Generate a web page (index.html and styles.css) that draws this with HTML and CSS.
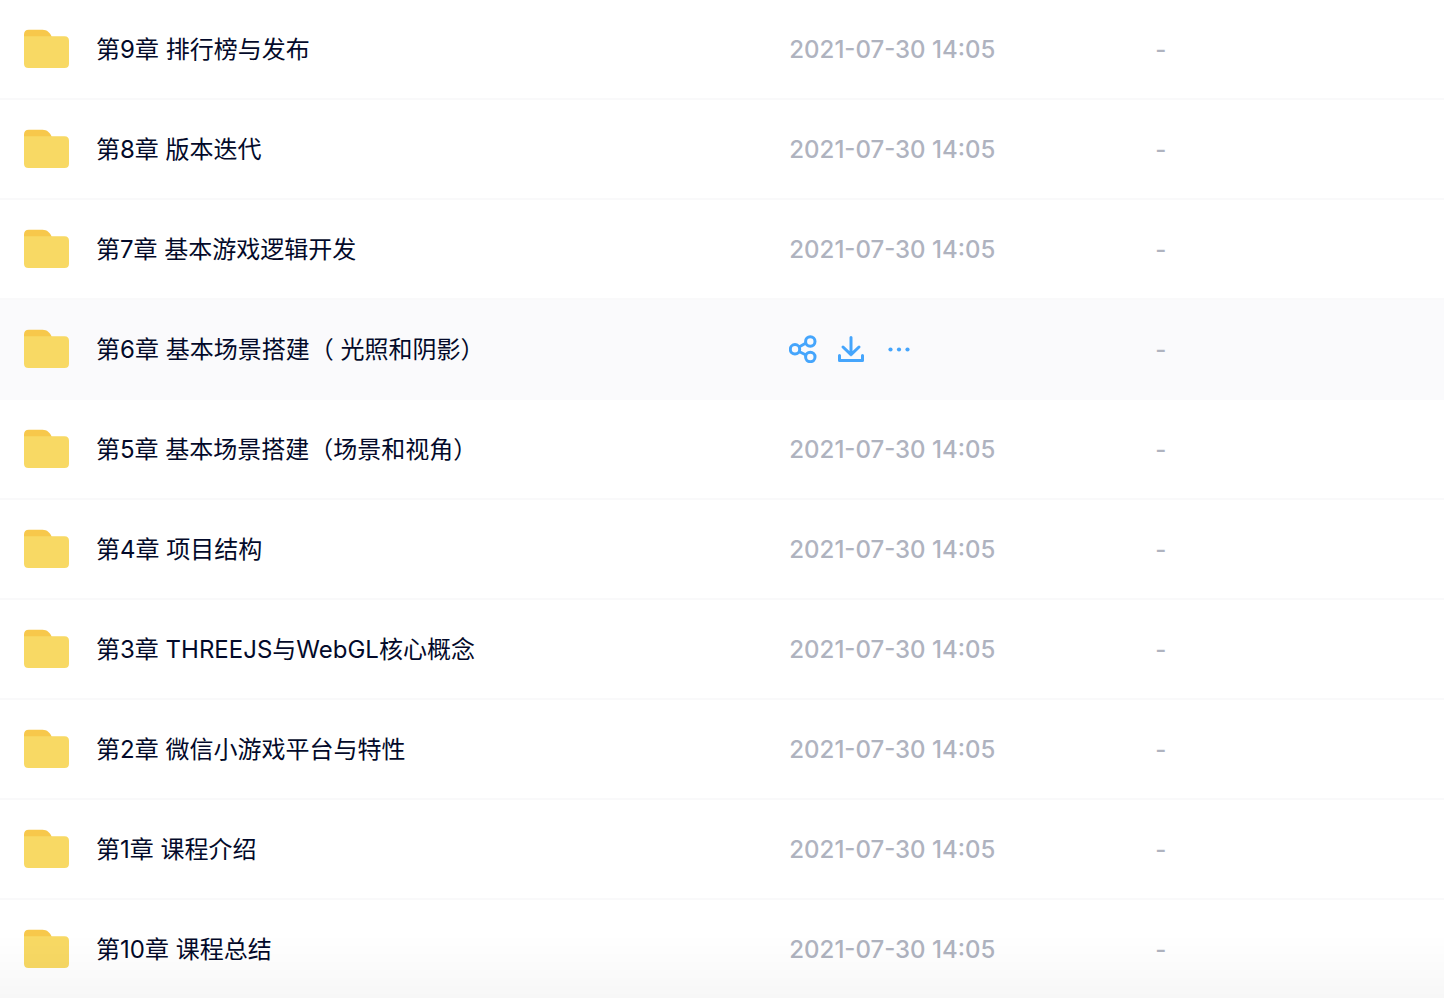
FILE: index.html
```html
<!DOCTYPE html>
<html lang="zh-CN">

<head>
    <meta charset="utf-8">
    <title>文件列表</title>
    <link rel="stylesheet" href="styles.css">
</head>

<body>
    <svg class="sprite" aria-hidden="true">
        <symbol id="folder" viewBox="0 0 46 40">
            <path fill="#f7c84b" d="M0 12V5.500Q0 .7 4.800 .7H18.500C23 .7 26 3.500 27.500 7.500V12Z" />
            <path fill="#f8d964" d="M0 7.200H40.500Q45 7.200 45 11.700V34.500Q45 39 40.500 39H4.500Q0 39 0 34.500Z" />
        </symbol>
    </svg>

    <main>
        <table class="file-list" aria-label="文件列表">
            <colgroup>
                <col class="col-name">
                <col class="col-date">
                <col class="col-size">
            </colgroup>
            <tbody>
                <tr>
                    <td><a class="name" href="#"><svg class="folder"><use href="#folder" /></svg><span>第9章 排行榜与发布</span></a></td>
                    <td><span>2021-07-30 14:05</span></td>
                    <td><span>-</span></td>
                </tr>
                <tr>
                    <td><a class="name" href="#"><svg class="folder"><use href="#folder" /></svg><span>第8章 版本迭代</span></a></td>
                    <td><span>2021-07-30 14:05</span></td>
                    <td><span>-</span></td>
                </tr>
                <tr>
                    <td><a class="name" href="#"><svg class="folder"><use href="#folder" /></svg><span>第7章 基本游戏逻辑开发</span></a></td>
                    <td><span>2021-07-30 14:05</span></td>
                    <td><span>-</span></td>
                </tr>
                <tr class="active">
                    <td><a class="name" href="#"><svg class="folder"><use href="#folder" /></svg><span>第6章 基本场景搭建（ 光照和阴影）</span></a></td>
                    <td>
                        <div class="actions">
                            <button type="button" aria-label="分享">
                                <svg viewBox="0 0 28 28">
                                    <path d="M10 12L17 8M10 16.500L17 20" />
                                    <circle cx="6" cy="14.300" r="4.700" />
                                    <circle cx="21.300" cy="6.500" r="4.700" />
                                    <circle cx="21.300" cy="22" r="4.700" />
                                </svg>
                            </button>
                            <button type="button" aria-label="下载">
                                <svg viewBox="0 0 28 28">
                                    <path class="round" d="M14 2.500V19.500M6 12L14 19.700L22 12" />
                                    <path class="round" d="M2.500 20.500V25.500H25.500V20.500" />
                                </svg>
                            </button>
                            <button type="button" aria-label="更多">
                                <svg class="dots" viewBox="0 0 28 28">
                                    <circle cx="5.500" cy="14.500" r="2.100" />
                                    <circle cx="14" cy="14.500" r="2.100" />
                                    <circle cx="22.500" cy="14.500" r="2.100" />
                                </svg>
                            </button>
                        </div>
                    </td>
                    <td><span>-</span></td>
                </tr>
                <tr>
                    <td><a class="name" href="#"><svg class="folder"><use href="#folder" /></svg><span>第5章 基本场景搭建（场景和视角）</span></a></td>
                    <td><span>2021-07-30 14:05</span></td>
                    <td><span>-</span></td>
                </tr>
                <tr>
                    <td><a class="name" href="#"><svg class="folder"><use href="#folder" /></svg><span>第4章 项目结构</span></a></td>
                    <td><span>2021-07-30 14:05</span></td>
                    <td><span>-</span></td>
                </tr>
                <tr>
                    <td><a class="name" href="#"><svg class="folder"><use href="#folder" /></svg><span>第3章 THREEJS与WebGL核心概念</span></a></td>
                    <td><span>2021-07-30 14:05</span></td>
                    <td><span>-</span></td>
                </tr>
                <tr>
                    <td><a class="name" href="#"><svg class="folder"><use href="#folder" /></svg><span>第2章 微信小游戏平台与特性</span></a></td>
                    <td><span>2021-07-30 14:05</span></td>
                    <td><span>-</span></td>
                </tr>
                <tr>
                    <td><a class="name" href="#"><svg class="folder"><use href="#folder" /></svg><span>第1章 课程介绍</span></a></td>
                    <td><span>2021-07-30 14:05</span></td>
                    <td><span>-</span></td>
                </tr>
                <tr>
                    <td><a class="name" href="#"><svg class="folder"><use href="#folder" /></svg><span>第10章 课程总结</span></a></td>
                    <td><span>2021-07-30 14:05</span></td>
                    <td><span>-</span></td>
                </tr>
            </tbody>
        </table>
    </main>
    <div class="fade"></div>
</body>

</html>
```
FILE: styles.css
```css
* {
    box-sizing: border-box;
    margin: 0;
    padding: 0;
}

body {
    background-color: #fff;
    color: #03081a;
    font-family: Inter, "Noto Sans CJK SC", sans-serif;
    font-size: 24px;
    line-height: 36px;
}

.sprite {
    display: none;
}

.file-list {
    width: 100%;
    table-layout: fixed;
    border-collapse: separate;
    border-spacing: 0;
}

.col-name {
    width: 53%;
}

.col-date {
    width: 366px;
}

.file-list td {
    height: 100px;
    padding: 0 24px;
    border-bottom: 2px solid #f9f9fa;
    color: #afb3bf;
    font-weight: 500;
    white-space: nowrap;
    vertical-align: middle;
}

.file-list span {
    display: inline-block;
    padding-top: 2px;
}

.file-list tr:last-child td {
    height: 98px;
    border-bottom: 0 none;
}

.file-list .active td {
    background-color: #fafafc;
    border-bottom-color: #fafafc;
}

.name {
    display: flex;
    align-items: center;
    column-gap: 26px;
    color: #030a2a;
    font-weight: 400;
    text-decoration: none;
}

.folder {
    flex: none;
    width: 46px;
    height: 40px;
}

.actions {
    display: flex;
    align-items: center;
    column-gap: 20px;
}

.actions button {
    display: flex;
    background: none;
    border: 0 none;
    cursor: pointer;
}

.actions svg {
    width: 28px;
    height: 28px;
    fill: none;
    stroke: #45a5fc;
    stroke-width: 3;
}

.actions .round {
    stroke-linecap: round;
    stroke-linejoin: round;
}

.actions .dots {
    fill: #45a5fc;
    stroke: none;
}

/* soft shade over the bottom of the list */
.fade {
    position: fixed;
    bottom: 0;
    left: 0;
    width: 100%;
    height: 64px;
    background: linear-gradient(rgba(0, 0, 0, 0), rgba(0, 0, 0, .03));
    pointer-events: none;
}
```
